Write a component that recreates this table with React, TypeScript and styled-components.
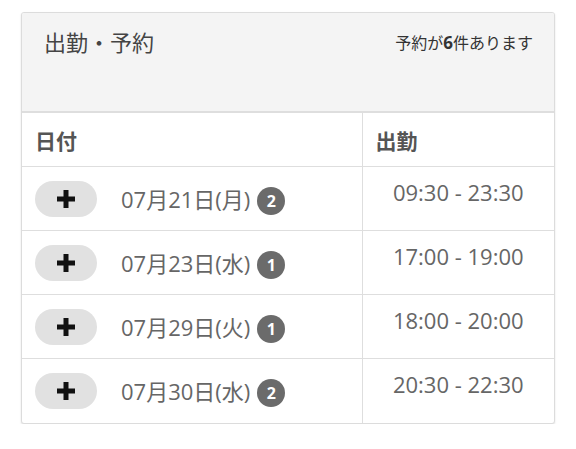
import React from "react";
import styled, { createGlobalStyle } from "styled-components";

const Global = createGlobalStyle`
  body {
    margin: 0;
    background: #fff;
    font-family: "Open Sans", "Noto Sans CJK JP", sans-serif;
  }
`;

const Page = styled.div`
  padding: 12px 21px 0 21px;
`;

const Card = styled.div`
  width: 534px;
  box-sizing: border-box;
  border: 1px solid #dcdcdc;
  border-radius: 3px;
  box-shadow: 0 1px 2px rgba(0, 0, 0, 0.12);
  overflow: hidden;
  background: #fff;
`;

const Header = styled.div`
  height: 100px;
  background: #f4f4f4;
  border-bottom: 2px solid #dedede;
  display: flex;
  justify-content: space-between;
  align-items: flex-start;
  padding: 14px 21px 0 22px;
  box-sizing: border-box;
`;

const Title = styled.div`
  font-size: 22px;
  color: #444;
  line-height: 30px;
`;

const Summary = styled.div`
  font-size: 16px;
  color: #333;
  line-height: 22px;
  margin-top: 5px;
  b {
    font-weight: 700;
    font-size: 17px;
  }
`;

const Table = styled.table`
  width: 100%;
  border-collapse: collapse;
`;

const Th = styled.th`
  text-align: left;
  font-size: 21px;
  font-weight: 700;
  color: #555;
  height: 53px;
  padding: 0 13px;
  border-bottom: 1px solid #dedede;
  & + & {
    border-left: 1px solid #dedede;
  }
`;

const Td = styled.td<{ $time?: boolean }>`
  height: 64px;
  box-sizing: border-box;
  padding: ${(p) => (p.$time ? "10px 13px 0" : "0 13px")};
  border-top: 1px solid #dedede;
  text-align: ${(p) => (p.$time ? "center" : "left")};
  vertical-align: ${(p) => (p.$time ? "top" : "middle")};
  & + & {
    border-left: 1px solid #dedede;
  }
`;

const DateCell = styled.div`
  display: flex;
  align-items: center;
`;

const AddButton = styled.button`
  width: 62px;
  height: 36px;
  border: none;
  border-radius: 18px;
  background: #e1e1e1;
  display: flex;
  align-items: center;
  justify-content: center;
  padding: 0;
  margin-right: 24px;
`;

const DateText = styled.span`
  font-size: 22px;
  color: #666;
  line-height: 30px;
`;

const Badge = styled.span`
  display: inline-flex;
  align-items: center;
  justify-content: center;
  width: 28px;
  height: 28px;
  border-radius: 50%;
  background: #6b6b6b;
  color: #fff;
  font-size: 16px;
  font-weight: 700;
  margin-left: 7px;
  margin-top: 4px;
`;

const Time = styled.span`
  font-size: 22px;
  color: #666;
  line-height: 30px;
`;

const Plus = () => (
  <svg width="18" height="18" viewBox="0 0 18 18">
    <path d="M9 0v18M0 9h18" stroke="#111" strokeWidth="5" strokeLinecap="butt" />
  </svg>
);

const rows = [
  { date: "07月21日(月)", n: 2, time: "09:30 - 23:30" },
  { date: "07月23日(水)", n: 1, time: "17:00 - 19:00" },
  { date: "07月29日(火)", n: 1, time: "18:00 - 20:00" },
  { date: "07月30日(水)", n: 2, time: "20:30 - 22:30" },
];

export default function App() {
  return (
    <>
      <Global />
      <Page>
        <Card>
          <Header>
            <Title>出勤・予約</Title>
            <Summary>
              予約が<b>6</b>件あります
            </Summary>
          </Header>
          <Table>
            <colgroup>
              <col style={{ width: 340 }} />
              <col />
            </colgroup>
            <thead>
              <tr>
                <Th>日付</Th>
                <Th>出勤</Th>
              </tr>
            </thead>
            <tbody>
              {rows.map((r) => (
                <tr key={r.date}>
                  <Td>
                    <DateCell>
                      <AddButton aria-label="追加">
                        <Plus />
                      </AddButton>
                      <DateText>{r.date}</DateText>
                      <Badge>{r.n}</Badge>
                    </DateCell>
                  </Td>
                  <Td $time>
                    <Time>{r.time}</Time>
                  </Td>
                </tr>
              ))}
            </tbody>
          </Table>
        </Card>
      </Page>
    </>
  );
}
